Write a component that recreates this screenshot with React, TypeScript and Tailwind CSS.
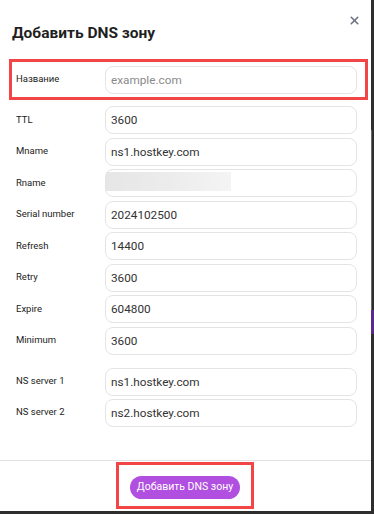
import { X } from 'lucide-react';

interface Field {
    label: string;
    value?: string;
    placeholder?: string;
    hidden?: boolean;
}

const soaFields: Field[] = [
    { label: 'TTL', value: '3600' },
    { label: 'Mname', value: 'ns1.hostkey.com' },
    { label: 'Rname', hidden: true },
    { label: 'Serial number', value: '2024102500' },
    { label: 'Refresh', value: '14400' },
    { label: 'Retry', value: '3600' },
    { label: 'Expire', value: '604800' },
    { label: 'Minimum', value: '3600' },
];

const nsFields: Field[] = [
    { label: 'NS server 1', value: 'ns1.hostkey.com' },
    { label: 'NS server 2', value: 'ns2.hostkey.com' },
];

const FieldRow = ({ field }: { field: Field }) => (
    <div className="flex items-center h-[28px]">
        <label className="w-[89px] shrink-0 text-[9.5px] text-[#222]">{field.label}</label>
        <div className="relative w-[252px] h-[28px]">
            <input
                type="text"
                readOnly
                defaultValue={field.value ?? ''}
                placeholder={field.placeholder}
                className="w-full h-full rounded-[8px] border border-[#e4e4e4] bg-white px-[5px] text-[11.75px] text-[#333] placeholder:text-[#8a8a8a] outline-none"
            />
            {field.hidden && (
                <div className="absolute left-[1px] top-[3px] w-[125px] h-[19px] bg-gradient-to-r from-[#e6e6e6] via-[#ececec] to-[#f4f4f4]" />
            )}
        </div>
    </div>
);

export default function App() {
    return (
        <div className="w-[374px] h-[514px] bg-[#2e2e2e] flex font-['Roboto',sans-serif] overflow-hidden">
            <div className="w-[371px] h-[511px] bg-white flex flex-col">
                <div className="relative pt-[22px] px-3">
                    <h2 className="text-[15.5px] leading-[22px] font-bold text-[#1f1f1f]">Добавить DNS зону</h2>
                    <button className="absolute top-[14px] right-[10px] text-[#6b7280]">
                        <X className="w-[13px] h-[13px]" strokeWidth={3} />
                    </button>
                </div>

                <div className="mt-[15px] mx-[9px] w-[359px] border-[3px] border-[#f24545] flex items-center h-[41px] pl-[4px]">
                    <FieldRow field={{ label: 'Название', placeholder: 'example.com' }} />
                </div>

                <div className="mt-[6px] pl-[16px] flex flex-col gap-[3.5px]">
                    {soaFields.map((f) => (
                        <FieldRow key={f.label} field={f} />
                    ))}
                </div>

                <div className="mt-[13px] pl-[16px] flex flex-col gap-[3px]">
                    {nsFields.map((f) => (
                        <FieldRow key={f.label} field={f} />
                    ))}
                </div>

                <div className="mt-auto border-t border-[#e2e2e2] flex justify-center pt-[1px] pb-[2px]">
                    <div className="border-[3px] border-[#f24545] ml-[-1px] px-[11px] pt-[8px] pb-[7px]">
                        <button className="h-[23px] w-[110px] rounded-full bg-[#b14fe0] text-white text-[10.5px] leading-none">
                            Добавить DNS зону
                        </button>
                    </div>
                </div>
            </div>
            <div className="flex-1 flex flex-col">
                <div className="h-[130px]" />
                <div className="h-[180px] border-l border-[#6a6a6a]" />
                <div className="h-[24px] bg-[#5a2a8a]" />
                <div className="flex-1" />
            </div>
        </div>
    );
}
